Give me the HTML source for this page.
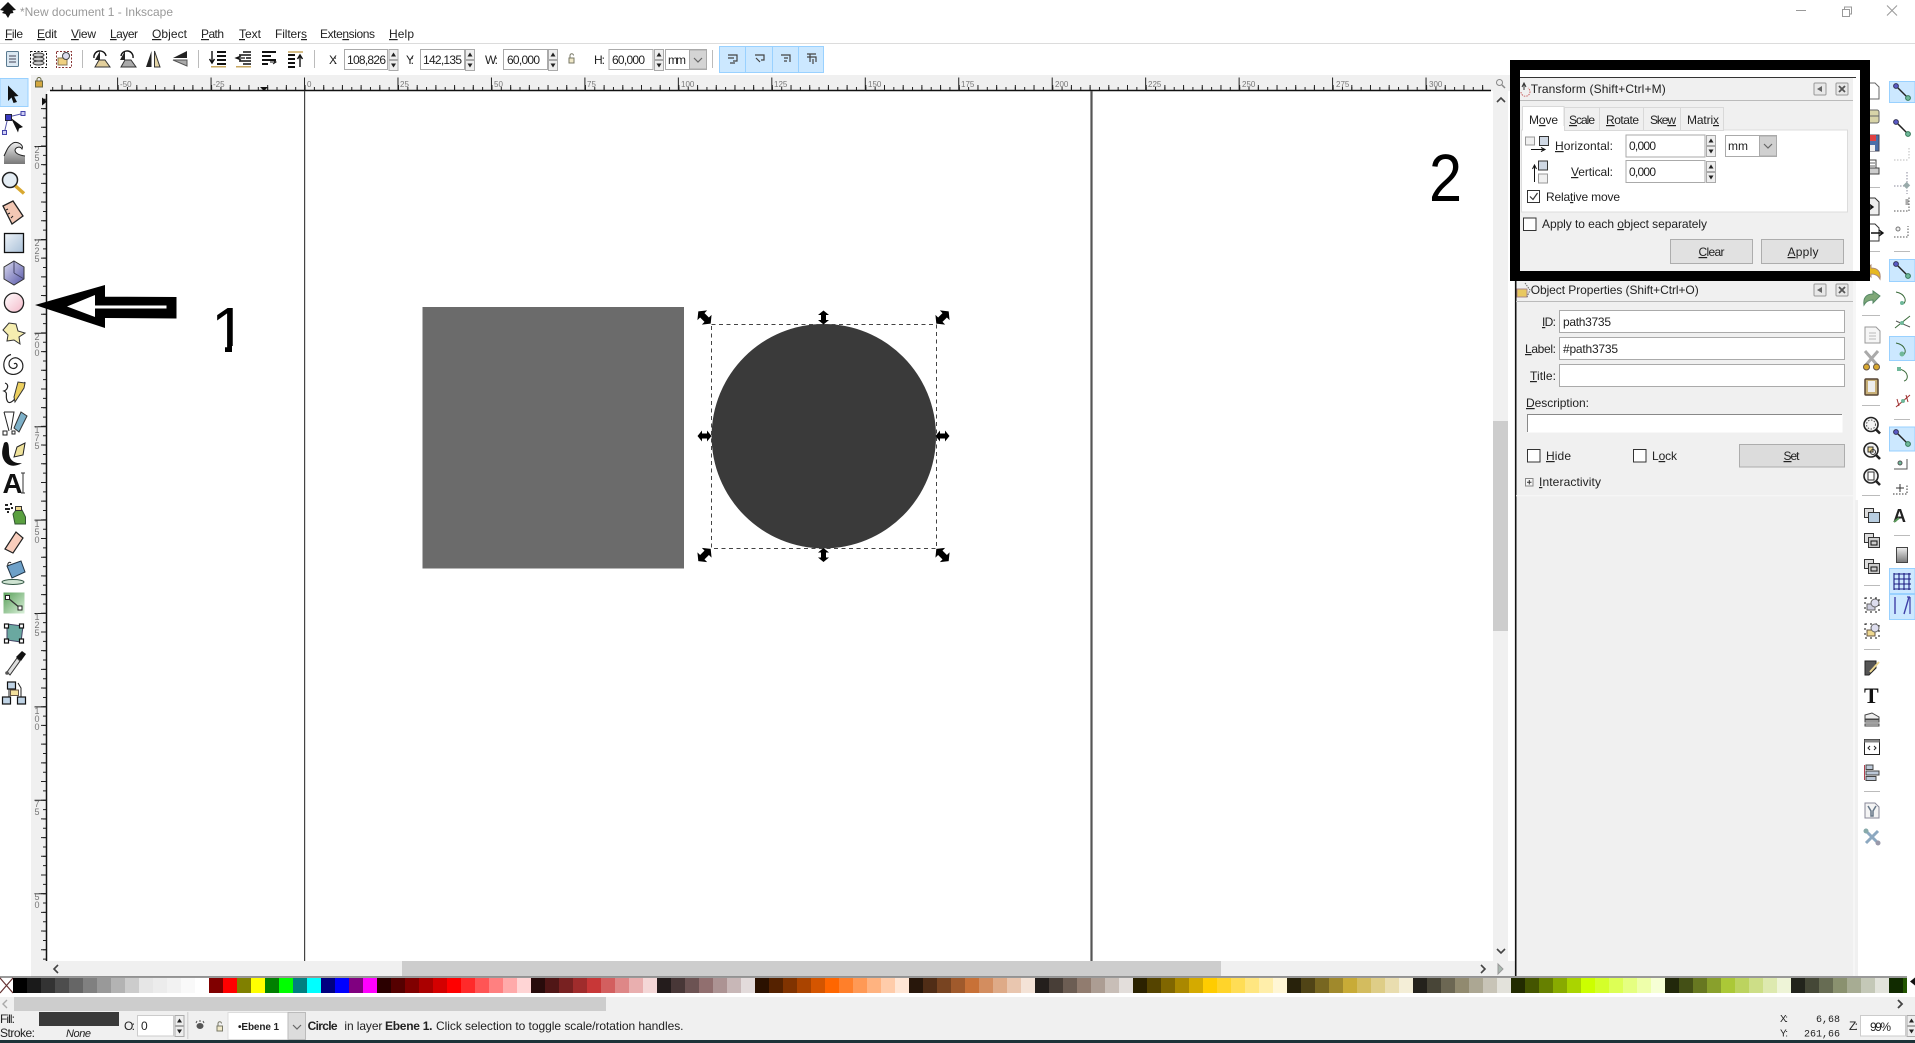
<!DOCTYPE html>
<html><head><meta charset="utf-8"><title>Inkscape</title>
<style>
html,body{margin:0;padding:0;background:#fff;width:1915px;height:1043px;overflow:hidden}
svg{position:absolute;left:0;top:0}
text{font-family:"Liberation Sans",sans-serif;font-size:12px;fill:#222}
.u{text-decoration:underline}
.r{font-size:8px;fill:#777}
.v{font-size:9px;fill:#777;text-anchor:middle}
.g{fill:#999}
#pal{position:absolute;left:13px;top:978px;height:15px;width:1894px;font-size:0;white-space:nowrap;overflow:hidden}
#pal i{display:inline-block;width:14px;height:15px}
</style></head><body>
<svg width="1915" height="1043" viewBox="0 0 1915 1043" xmlns="http://www.w3.org/2000/svg">
<defs>
<clipPath id="nofoot"><path d="M200 290H240V346H232V353H225V346H200Z"/></clipPath>
<linearGradient id="gb" x1="0" y1="0" x2="1" y2="1"><stop offset="0" stop-color="#eef3f8"/><stop offset="1" stop-color="#a9c0d8"/></linearGradient>
<linearGradient id="gp" x1="0" y1="0" x2="1" y2="1"><stop offset="0" stop-color="#fff"/><stop offset="1" stop-color="#f4b8c8"/></linearGradient>
<linearGradient id="gg" x1="0" y1="0" x2="0" y2="1"><stop offset="0" stop-color="#eee"/><stop offset="1" stop-color="#777"/></linearGradient>
<linearGradient id="gv" x1="0" y1="0" x2="1" y2="1"><stop offset="0" stop-color="#dcdcf0"/><stop offset="1" stop-color="#5656a8"/></linearGradient>
<linearGradient id="gn" x1="0" y1="0" x2="1" y2="1"><stop offset="0" stop-color="#5aa05a"/><stop offset="1" stop-color="#d9f0d9"/></linearGradient>
<g id="sp"><rect x=".5" y=".5" width="9" height="10" fill="#eee" stroke="#aaa"/><rect x=".5" y="11.5" width="9" height="10" fill="#eee" stroke="#aaa"/><path d="M2.5 7.5 L5 3.5 L7.5 7.5Z M2.5 14.5 L7.5 14.5 L5 18.5Z" fill="#222"/></g>
<g id="hd"><path d="M-7 0 L-2.5 -5.5 L-2.5 -2.5 L2.5 -2.5 L2.5 -5.5 L7 0 L2.5 5.5 L2.5 2.5 L-2.5 2.5 L-2.5 5.5Z" fill="#000"/></g>
<g id="sn"><line x1="-6" y1="-6" x2="5" y2="5" stroke="#222" stroke-width="1.5"/><circle cx="-6" cy="-6" r="2.4" fill="#5a5ac8" stroke="#335"/><circle cx="6" cy="6" r="2.4" fill="#6fb89a" stroke="#375"/></g>
<g id="zm"><circle cx="-1" cy="-1" r="7" fill="#f4f4f4" stroke="#222" stroke-width="1.6"/><line x1="4" y1="4" x2="8" y2="8" stroke="#222" stroke-width="2.6"/></g>
<g id="ch"><path d="M-4 -2 L0 2 L4 -2" fill="none" stroke="#666" stroke-width="1.2"/></g>
<g id="dkl"><rect x="-6" y="-6" width="12" height="12" rx="1" fill="#e8e8e8" stroke="#999"/><path d="M2 -3 L-3 0 L2 3Z" fill="#666"/></g>
<g id="dkx"><rect x="-6" y="-6" width="12" height="12" rx="1" fill="#e8e8e8" stroke="#999"/><path d="M-3 -3 L3 3 M3 -3 L-3 3" stroke="#555" stroke-width="1.8"/></g>
</defs>

<!-- backgrounds -->
<rect width="1915" height="1043" fill="#fff"/>
<rect x="31" y="75" width="1479" height="16" fill="#f0f0f0"/>
<rect x="31" y="75" width="16" height="886" fill="#f0f0f0"/>
<rect x="1493" y="91" width="15" height="870" fill="#f0f0f0"/>
<rect x="1516" y="280" width="337" height="696" fill="#f0f0f0"/>
<rect x="1853" y="280" width="3" height="696" fill="#f6f6f6"/>
<rect x="1855" y="500" width="3" height="476" fill="#f0f0f0"/>

<!-- title bar -->
<path d="M8 2 L16 10 L12.5 10.5 L13.5 13 L10.5 13.5 L8 18 L5.5 14 L2 13 L4 11 L0 10Z" fill="#111"/>
<text x="20" y="16" class="g" textLength="153" lengthAdjust="spacingAndGlyphs">*New document 1 - Inkscape</text>
<path d="M1796 10.5H1806" stroke="#999"/>
<path d="M1842.5 9.5h7v7h-7zM1844.5 9.5v-2.5h7v7h-2" fill="none" stroke="#999"/>
<path d="M1887 5.5L1897 15.5M1897 5.5L1887 15.5" stroke="#999"/>

<!-- menu -->
<text x="5" y="38" textLength="18"><tspan class="u">F</tspan>ile</text>
<text x="37" y="38" textLength="20"><tspan class="u">E</tspan>dit</text>
<text x="71" y="38" textLength="25"><tspan class="u">V</tspan>iew</text>
<text x="110" y="38" textLength="28"><tspan class="u">L</tspan>ayer</text>
<text x="152" y="38" textLength="35"><tspan class="u">O</tspan>bject</text>
<text x="201" y="38" textLength="23"><tspan class="u">P</tspan>ath</text>
<text x="239" y="38" textLength="22"><tspan class="u">T</tspan>ext</text>
<text x="275" y="38" textLength="32">Filter<tspan class="u">s</tspan></text>
<text x="320" y="38" textLength="55">Exte<tspan class="u">n</tspan>sions</text>
<text x="389" y="38" textLength="25"><tspan class="u">H</tspan>elp</text>
<line x1="0" y1="43.5" x2="1915" y2="43.5" stroke="#dcdcdc"/>

<!-- top toolbar icons -->
<g>
<rect x="6.5" y="51.5" width="12" height="15" rx="1" fill="#dbe8f2" stroke="#5a7a90"/><path d="M9 56H16M9 59H16M9 62H16" stroke="#445"/>
<rect x="30.5" y="51.5" width="16" height="16" fill="#fff" stroke="#111" stroke-dasharray="2 1.5"/><ellipse cx="38.5" cy="55" rx="5.5" ry="2" fill="#ccc" stroke="#333"/><ellipse cx="38.5" cy="59" rx="5.5" ry="2" fill="#ccc" stroke="#333"/><ellipse cx="38.5" cy="63" rx="5.5" ry="2" fill="#ccc" stroke="#333"/>
<rect x="56.5" y="51.5" width="15" height="16" fill="#fff" stroke="#833" stroke-dasharray="2 1.5"/><rect x="58" y="58" width="9" height="7" fill="#f0d080" stroke="#875"/><circle cx="66" cy="56" r="3.5" fill="#dde" stroke="#444"/>
<line x1="82.5" y1="50" x2="82.5" y2="68" stroke="#bbb"/>
<path d="M95 67L110 67L105 60L99 60Z" fill="#e2cf9c" stroke="#333"/><path d="M100 60L100 51L95 60Z" fill="#222"/><path d="M94 58A6 6 0 0 1 106 56" fill="none" stroke="#111" stroke-width="1.4"/>
<path d="M121 67L136 67L131 60L125 60Z" fill="#aaa" stroke="#333"/><path d="M125 60L125 51L120 60Z" fill="#222"/><path d="M133 58A6 6 0 0 0 121 56" fill="none" stroke="#111" stroke-width="1.4"/>
<path d="M151.5 51L146 67H151.5Z" fill="#222"/><path d="M154.5 51L160 67H154.5Z" fill="#e4d5a6" stroke="#333"/>
<path d="M187 51L173 58H187Z" fill="#222"/><path d="M187 60L173 60L187 66Z" fill="#aaa" stroke="#555"/>
<line x1="198.5" y1="50" x2="198.5" y2="68" stroke="#bbb"/>
<path d="M212 51V62M209.5 59L212 63L214.5 59" fill="none" stroke="#111" stroke-width="1.4"/><path d="M217 52H226M217 56H226M217 60H226M217 64H226" stroke="#111" stroke-width="2"/><rect x="211" y="66" width="15" height="1.5" fill="#c9a860"/>
<path d="M236 58H245M241 56L236 58L241 60" fill="none" stroke="#111" stroke-width="1.2"/><path d="M243 52H251M239 55H251M246 58H251M239 61H251M243 64H251" stroke="#111" stroke-width="1.6"/><rect x="236" y="66" width="15" height="1.5" fill="#c9a860"/>
<path d="M262 52H276M262 56H271M262 60H276M262 64H268" stroke="#111" stroke-width="2"/><path d="M270 62H276M273 60L276 62L273 64" fill="none" stroke="#111"/>
<path d="M288 52H303" stroke="#c9a860" stroke-width="1.5"/><path d="M288 55H295M288 59H295M288 63H295M288 67H295" stroke="#111" stroke-width="2"/><path d="M300 67V56M297.5 59L300 55L302.5 59" fill="none" stroke="#111" stroke-width="1.4"/>
<line x1="314.5" y1="50" x2="314.5" y2="68" stroke="#bbb"/>
</g>
<text x="329" y="64" textLength="8">X:</text>
<rect x="344.5" y="49.5" width="43" height="20" fill="#fff" stroke="#aaa"/><text x="347" y="64" textLength="39">108,826</text>
<use href="#sp" transform="translate(388.5,49)"/>
<text x="406" y="64" textLength="8">Y:</text>
<rect x="420.5" y="49.5" width="44" height="20" fill="#fff" stroke="#aaa"/><text x="423" y="64" textLength="39">142,135</text>
<use href="#sp" transform="translate(465,49)"/>
<text x="485" y="64" textLength="13">W:</text>
<rect x="503.5" y="49.5" width="44" height="20" fill="#fff" stroke="#aaa"/><text x="507" y="64" textLength="33">60,000</text>
<use href="#sp" transform="translate(548,49)"/>
<rect x="569" y="58" width="5" height="5" fill="#f0e8c8" stroke="#776"/><path d="M570 58V55.5A1.7 1.7 0 0 1 573.5 55.5" fill="none" stroke="#776"/>
<text x="594" y="64" textLength="11">H:</text>
<rect x="609" y="49.5" width="44" height="20" fill="#fff" stroke="#aaa"/><text x="612" y="64" textLength="33">60,000</text>
<use href="#sp" transform="translate(654,49)"/>
<rect x="665.5" y="49.5" width="41" height="20" fill="#fff" stroke="#aaa"/><rect x="689.5" y="50" width="17" height="19" fill="#d4d4d4" stroke="#aaa"/><use href="#ch" transform="translate(698,60)"/>
<text x="668" y="64" textLength="18">mm</text>
<line x1="712.5" y1="50" x2="712.5" y2="68" stroke="#bbb"/>
<rect x="719.5" y="46.5" width="104" height="26" fill="#cce8ff" stroke="#99d1ff"/>
<path d="M745.5 46V72M772.5 46V72M798.5 46V72" stroke="#99d1ff"/>
<g fill="none" stroke="#444" stroke-width="1.2">
<path d="M728 55H737V61H733M728 58H734M730 63H735"/>
<path d="M755 55H764V60H761M756 58L760 62"/>
<path d="M781 55H790V62M784 58H788M784 61H787"/>
<path d="M807 54H816M807 57H816V62M810 54V62M813 59V64"/>
</g>

<!-- horizontal ruler -->
<rect x="35.5" y="81" width="7" height="6" fill="#d4a840" stroke="#664"/><path d="M37 81V79.5A2 2 0 0 1 41 79.5V81" fill="none" stroke="#664"/>
<line x1="50" y1="90.5" x2="1491" y2="90.5" stroke="#111" stroke-width="1.5"/>
<line x1="52.2" y1="88.5" x2="1491" y2="88.5" stroke="#222" stroke-width="3" stroke-dasharray="1 8.346"/>
<line x1="61.55" y1="87.5" x2="1491" y2="87.5" stroke="#222" stroke-width="5" stroke-dasharray="1 17.692"/>
<line x1="117.1" y1="84" x2="1491" y2="84" stroke="#222" stroke-width="13" stroke-dasharray="1 92.46"/>
<g class="r">
<text class="r" x="120" y="87">-50</text><text class="r" x="213" y="87">-25</text><text class="r" x="307" y="87">0</text><text class="r" x="400" y="87">25</text><text class="r" x="494" y="87">50</text><text class="r" x="587" y="87">75</text><text class="r" x="681" y="87">100</text><text class="r" x="774" y="87">125</text><text class="r" x="868" y="87">150</text><text class="r" x="961" y="87">175</text><text class="r" x="1055" y="87">200</text><text class="r" x="1148" y="87">225</text><text class="r" x="1242" y="87">250</text><text class="r" x="1336" y="87">275</text><text class="r" x="1429" y="87">300</text>
</g>
<path d="M260 87H268L264 91Z" fill="#111"/>

<!-- vertical ruler -->
<line x1="46.5" y1="94" x2="46.5" y2="961" stroke="#111" stroke-width="1.5"/>
<line x1="44.5" y1="98.8" x2="44.5" y2="961" stroke="#222" stroke-width="3" stroke-dasharray="1 8.346"/>
<line x1="43.5" y1="108.1" x2="43.5" y2="961" stroke="#222" stroke-width="5" stroke-dasharray="1 17.692"/>
<line x1="40.5" y1="146" x2="40.5" y2="961" stroke="#222" stroke-width="12" stroke-dasharray="1 92.4"/>
<path d="M42 97.5V105.5L47 101.5Z" fill="#111"/>
<text class="v" x="37" y="153">2</text><text class="v" x="37" y="161">5</text><text class="v" x="37" y="169">0</text>
<text class="v" x="37" y="246">2</text><text class="v" x="37" y="254">2</text><text class="v" x="37" y="262">5</text>
<text class="v" x="37" y="340">2</text><text class="v" x="37" y="348">0</text><text class="v" x="37" y="356">0</text>
<text class="v" x="37" y="433">1</text><text class="v" x="37" y="441">7</text><text class="v" x="37" y="449">5</text>
<text class="v" x="37" y="527">1</text><text class="v" x="37" y="535">5</text><text class="v" x="37" y="543">0</text>
<text class="v" x="37" y="620">1</text><text class="v" x="37" y="628">2</text><text class="v" x="37" y="636">5</text>
<text class="v" x="37" y="714">1</text><text class="v" x="37" y="722">0</text><text class="v" x="37" y="730">0</text>
<text class="v" x="37" y="807">7</text><text class="v" x="37" y="815">5</text>
<text class="v" x="37" y="900">5</text><text class="v" x="37" y="908">0</text>

<!-- left toolbox -->
<rect x="0" y="78.5" width="28" height="28" fill="#cce8ff" stroke="#99d1ff"/>
<path d="M8 85.5L18.5 96L14.2 96.5L17 102L13.5 103L11.5 97.5L8 101Z" fill="#111"/>
<path d="M8 117L23 113.5M8 117L4.5 132" stroke="#5555aa" fill="none"/><rect x="5.5" y="114.5" width="6" height="6" fill="#3a3ac0" stroke="#223"/><rect x="21" y="111.5" width="4" height="4" fill="#cfcff5" stroke="#44a"/><rect x="2.5" y="130.5" width="4" height="4" fill="#cfcff5" stroke="#44a"/><path d="M11 118L23 127L19 128.5L18 132.5Z" fill="#111"/>
<path d="M4 164V156C7 150 8 146 13 143C18 141 24 145 22 149C20 146 16 147 15 150C15 153 18 155 25 156V164Z" fill="url(#gg)"/><path d="M4 156C7 150 8 146 13 143C18 141 24 145 22 149C20 146 16 147 15 150C15 153 18 155 25 156" fill="none" stroke="#222"/>
<circle cx="10" cy="180" r="7.5" fill="#e4edf4" stroke="#222" stroke-width="1.5"/><line x1="15.5" y1="186" x2="24" y2="193.5" stroke="#d8a830" stroke-width="3.5"/>
<path d="M3 206L13 201L23 216L12 224Z" fill="#f3c8b4" stroke="#222" stroke-width="1.3"/><path d="M6 210L8 209M8 214L10 213M11 218L13 216" stroke="#222"/>
<rect x="4.5" y="233.5" width="19" height="19" fill="url(#gb)" stroke="#111" stroke-width="1.3"/>
<path d="M14 261L24 267V279L14 285L4 279V267Z" fill="url(#gv)" stroke="#333"/><path d="M14 273V261M14 273L24 279" stroke="#446" fill="none"/>
<circle cx="14" cy="302.7" r="9.6" fill="url(#gp)" stroke="#222" stroke-width="1.3"/>
<path d="M3 330L9 323L16 324L18 331L25 333L19 337L20 344L14 340L7 341L8 335Z" fill="#f6eeb0" stroke="#333"/>
<path d="M14 364C16 362 18 365 16.5 367C14 370 9 368 9 364C9 359 15 356 19 359C24 362 24 369 20 372C15 376 7 375 4.5 369C2.5 363 5 356 11 354.5" fill="none" stroke="#222" stroke-width="1.2"/>
<path d="M5 383C10 385 7 390 4 391C9 393 4 397 8 402C11 405 20 395 25 382" fill="none" stroke="#222" stroke-width="1.2"/><path d="M14 397L18 382L25 383L24 388L15 402Z" fill="#edd060" stroke="#333"/>
<path d="M4 412H14L11 430M4 412L9 431" fill="none" stroke="#222"/><rect x="3" y="431" width="4" height="4" fill="#fff" stroke="#222"/><rect x="12" y="431" width="3" height="3" fill="#fff" stroke="#222"/><path d="M14 428L21 412L27 416L19 432Z" fill="#7db0c8" stroke="#333"/>
<path d="M4 443C8 440 9 444 9 452C9 460 14 464 22 463C14 468 6 466 3 458C1 452 3 447 4 443Z" fill="#111"/><path d="M14 457L17 447L25 443L23 455Z" fill="#efe29a" stroke="#222"/>
<text x="2.5" y="493" style="font-size:28px;font-weight:bold;fill:#111" textLength="20" lengthAdjust="spacingAndGlyphs">A</text><path d="M23 473V493M21 473H25M21 493H25" stroke="#333"/>
<path d="M5 505H8M5 509H10M7 512H9M10 504H12M11 508H13" stroke="#222" stroke-width="2"/><path d="M13 514L16 510H22L25.5 517V524L15 524Z" fill="#5aa040" stroke="#353"/><rect x="15.5" y="506.5" width="6" height="4" fill="#eed890" stroke="#333"/>
<path d="M5 549L16 532L23 538L13 553Z" fill="#f8cdbc" stroke="#222" stroke-width="1.2"/>
<path d="M7 566L21 561L25 572L12 578Z" fill="#6da0c8" stroke="#234"/><path d="M8 566C7 563 10 561 11 563" fill="none" stroke="#222"/><ellipse cx="13" cy="582" rx="11" ry="2.5" fill="#cfe4d2" stroke="#354"/>
<rect x="3.5" y="592.5" width="21" height="21" fill="url(#gn)"/><line x1="8" y1="598" x2="20" y2="608" stroke="#333" stroke-width="1.3"/><rect x="5.5" y="595.5" width="4" height="4" fill="#fff" stroke="#222"/><rect x="18" y="606" width="4" height="4" fill="#fff" stroke="#222"/>
<path d="M7 624L23 626L21 642L7 640Z" fill="#6aa8a0" stroke="#446"/><g fill="#fff" stroke="#111" stroke-width="1.2"><rect x="4.5" y="624" width="4" height="4"/><rect x="19.5" y="624" width="4" height="4"/><rect x="4.5" y="639" width="4" height="4"/><rect x="19.5" y="639" width="4" height="4"/></g>
<path d="M7 672L17 658L20 661L10 675Z" fill="#ddd" stroke="#333"/><path d="M16 657L22 651L26 654L21 661Z" fill="#111"/><circle cx="7" cy="673" r="1.8" fill="#555"/>
<path d="M15 695V682M9 704V688L12 683M21 704V688L18 683" fill="none" stroke="#222"/><rect x="7.5" y="682" width="8" height="7" fill="#c0d4e6" stroke="#111" stroke-width="1.2"/><rect x="10.5" y="690" width="8" height="5.5" fill="#f4e09c" stroke="#654"/><rect x="2.5" y="697" width="8" height="7" fill="#c0d4e6" stroke="#111" stroke-width="1.2"/><rect x="17.5" y="697" width="8" height="7" fill="#c0d4e6" stroke="#111" stroke-width="1.2"/>

<!-- canvas objects -->
<rect x="422.5" y="307" width="261.5" height="261.5" fill="#6b6b6b"/>
<line x1="304.6" y1="91" x2="304.6" y2="961" stroke="#444" stroke-width="1.2"/>
<line x1="1091.5" y1="91" x2="1091.5" y2="961" stroke="#555" stroke-width="2.2"/>
<circle cx="823.8" cy="436.2" r="112.2" fill="#3a3a3a"/>
<rect x="711.5" y="324.5" width="225" height="224" fill="none" stroke="#444" stroke-dasharray="4 3.5"/>
<use href="#hd" transform="translate(704.5,317.5) rotate(45) scale(1.25)"/>
<use href="#hd" transform="translate(942.5,317.5) rotate(-45) scale(1.25)"/>
<use href="#hd" transform="translate(704.5,555) rotate(-45) scale(1.25)"/>
<use href="#hd" transform="translate(942.5,555) rotate(45) scale(1.25)"/>
<use href="#hd" transform="translate(823.5,317.5) rotate(90)"/>
<use href="#hd" transform="translate(823.5,555) rotate(90)"/>
<use href="#hd" transform="translate(704.5,436)"/>
<use href="#hd" transform="translate(942.5,436)"/>

<!-- annotation 1 -->
<path d="M35 305L105 285V296.7L176.5 297V318.5L105 318V328Z" fill="#000"/>
<path d="M67 306.5L95 295V305.5H166.5V308.5H95V317Z" fill="#fff"/>
<text x="211" y="352" clip-path="url(#nofoot)" style="font-size:64px;fill:#000">1</text>

<!-- v scrollbar -->
<rect x="1493" y="421" width="15" height="210" fill="#cdcdcd"/>
<path d="M1497 102L1501 98L1505 102" fill="none" stroke="#444" stroke-width="1.6"/>
<path d="M1497 949L1501 953L1505 949" fill="none" stroke="#444" stroke-width="1.6"/>
<circle cx="1499.5" cy="82.5" r="3" fill="#eee" stroke="#888"/><line x1="1502" y1="85" x2="1505" y2="88" stroke="#888" stroke-width="1.5"/>

<!-- h scrollbar -->
<rect x="31" y="961" width="1484" height="16" fill="#f0f0f0"/>
<rect x="402" y="961" width="819" height="15" fill="#cdcdcd"/>
<path d="M58 965L54 969L58 973" fill="none" stroke="#444" stroke-width="1.6"/>
<path d="M1481 965L1485 969L1481 973" fill="none" stroke="#444" stroke-width="1.6"/>
<path d="M1498 964L1503 969L1498 974Z" fill="#aab8b0" stroke="#999"/>
<line x1="0" y1="977" x2="1907" y2="977" stroke="#333"/>

<!-- command bar -->
<g stroke="#bbb"><path d="M1862 187.5H1880M1862 251.5H1880M1862 315.5H1880M1862 405.5H1880M1862 495.5H1880M1864 585.5H1880M1864 649.5H1880M1864 791.5H1880"/></g>
<path d="M1864 83H1875L1879 87V99H1864Z" fill="#fff" stroke="#666"/>
<rect x="1863" y="110" width="16" height="13" rx="2" fill="#d8d4a8" stroke="#666"/><path d="M1863 116H1879" stroke="#666"/>
<rect x="1863" y="135" width="16" height="16" fill="#4a6ea8" stroke="#445"/><rect x="1866" y="135" width="10" height="6" fill="#e04040"/><rect x="1867" y="145" width="8" height="6" fill="#eee"/>
<path d="M1865 160H1876V168H1865Z" fill="#fff" stroke="#444"/><rect x="1863" y="168" width="16" height="6" fill="#ccc" stroke="#444"/><path d="M1867 163H1875M1867 166H1875" stroke="#666"/>
<path d="M1865 198H1875L1879 202V215H1865Z" fill="#eee" stroke="#333"/><path d="M1862 207H1872M1869 204L1873 207L1869 210" fill="none" stroke="#111" stroke-width="1.4"/>
<path d="M1865 224H1875L1879 228V241H1865Z" fill="#fff" stroke="#333"/><path d="M1871 233H1882M1879 230L1883 233L1879 236" fill="none" stroke="#111" stroke-width="1.4"/>
<path d="M1864 270L1871 265V268C1878 268 1881 272 1880 279C1878 275 1875 274 1871 274V277Z" fill="#e6b820" stroke="#a87"/>
<path d="M1880 296L1873 291V294C1866 294 1863 298 1864 305C1866 301 1869 300 1873 300V303Z" fill="#7fa878" stroke="#586"/>
<path d="M1865 327H1876L1880 331V343H1865Z" fill="#f6f6f6" stroke="#999"/><path d="M1869 333H1876M1869 336H1876M1869 339H1876" stroke="#bbb"/>
<path d="M1865 351L1878 366M1878 351L1865 366" stroke="#aaa" stroke-width="3"/><circle cx="1866.5" cy="367" r="3" fill="#d8a830" stroke="#654"/><circle cx="1876.5" cy="367" r="3" fill="#d8a830" stroke="#654"/>
<rect x="1865" y="379" width="13" height="16" rx="1" fill="#c8b078" stroke="#543" stroke-width="1.5"/><rect x="1868" y="381" width="7" height="11" fill="#eee"/>
<use href="#zm" transform="translate(1872,425.5)"/><circle cx="1871" cy="424.5" r="4.5" fill="none" stroke="#555" stroke-dasharray="1.5 1.5"/>
<use href="#zm" transform="translate(1872,451)"/><rect x="1868" y="447" width="5" height="5" fill="#eed890" stroke="#333"/><circle cx="1873" cy="452" r="2.5" fill="none" stroke="#333"/>
<use href="#zm" transform="translate(1872,477)"/><rect x="1868" y="472" width="6" height="8" fill="#fff" stroke="#333"/>
<rect x="1864.5" y="508.5" width="9" height="9" fill="#ddd" stroke="#333"/><rect x="1868.5" y="512.5" width="11" height="10" fill="#b8cde0" stroke="#333"/>
<rect x="1864.5" y="533.5" width="9" height="9" fill="#ddd" stroke="#333"/><rect x="1868.5" y="537.5" width="11" height="10" fill="#ccc" stroke="#333"/><rect x="1871" y="541" width="6" height="4" fill="none" stroke="#111"/>
<rect x="1864.5" y="559.5" width="9" height="9" fill="#ddd" stroke="#333"/><rect x="1868.5" y="563.5" width="11" height="10" fill="#ccc" stroke="#333"/><rect x="1871" y="567" width="6" height="4" fill="none" stroke="#111"/>
<rect x="1865" y="598" width="14" height="14" fill="none" stroke="#111" stroke-dasharray="2 3"/><rect x="1867" y="604" width="8" height="6" fill="#ccd" stroke="#666"/><circle cx="1875" cy="603" r="4" fill="#dde" stroke="#666"/>
<rect x="1865" y="624" width="14" height="14" fill="none" stroke="#111" stroke-dasharray="2 3"/><rect x="1867" y="630" width="8" height="6" fill="#eed890" stroke="#654"/><circle cx="1875" cy="628" r="4" fill="#dde" stroke="#666"/>
<path d="M1865 661H1876V668L1869 675H1865Z" fill="#555" stroke="#222"/><path d="M1870 672L1879 662" stroke="#eed890" stroke-width="2"/>
<text x="1864" y="703" style="font-family:'Liberation Serif',serif;font-weight:bold;font-size:22px;fill:#111">T</text>
<g fill="#eee" stroke="#444"><path d="M1865 715L1872 713L1879 717V719L1865 719Z"/><path d="M1865 720H1879V722H1865Z"/><path d="M1865 724H1879V726H1865Z"/></g>
<rect x="1864.5" y="739.5" width="15" height="15" fill="#fff" stroke="#222"/><rect x="1864.5" y="739.5" width="15" height="3" fill="#888"/><path d="M1870 746L1868 748L1870 750M1874 746L1876 748L1874 750" fill="none" stroke="#222"/>
<line x1="1864.5" y1="765" x2="1864.5" y2="780" stroke="#b04050"/><rect x="1866" y="765" width="7" height="4.5" fill="#bcc8d8" stroke="#444"/><rect x="1866" y="771" width="13" height="4" fill="#bcc8d8" stroke="#444"/><rect x="1866" y="776.5" width="10" height="4" fill="#bcc8d8" stroke="#444"/>
<path d="M1865 803H1875L1879 807V818H1865Z" fill="#f4f4f4" stroke="#889"/><path d="M1868 806L1871 811V816H1873V811L1876 806" fill="none" stroke="#678" stroke-width="1.5"/>
<path d="M1866 831L1878 843M1878 831L1866 843" stroke="#8ca8c0" stroke-width="3"/><circle cx="1866" cy="831" r="2.5" fill="#8aa"/><circle cx="1878" cy="843" r="2.5" fill="#99a"/>

<!-- snap bar -->
<g fill="#cce8ff" stroke="#99d1ff"><rect x="1889.5" y="81.5" width="25.5" height="21"/><rect x="1889.5" y="259.5" width="25.5" height="22"/><rect x="1889.5" y="336.5" width="25.5" height="24"/><rect x="1889.5" y="427" width="25.5" height="24"/><rect x="1889.5" y="568.5" width="25.5" height="25"/><rect x="1889.5" y="594.5" width="25.5" height="25"/></g>
<use href="#sn" transform="translate(1902,92)"/>
<use href="#sn" transform="translate(1902,128)"/>
<path d="M1894 160H1909M1909 148V160" stroke="#bbb" stroke-dasharray="1.5 1.5" fill="none"/>
<path d="M1894 186H1908M1907 172V194" stroke="#889" stroke-dasharray="1.5 1.5" fill="none"/><rect x="1904.5" y="183" width="5" height="5" fill="#9aa" transform="rotate(45 1907 185)"/>
<path d="M1894 211H1909V196" stroke="#555" stroke-dasharray="1.5 1.5" fill="none"/><rect x="1905.5" y="199" width="3" height="6" fill="#aaa"/>
<path d="M1894 237H1908V226" stroke="#555" stroke-dasharray="1.5 1.5" fill="none"/><circle cx="1898" cy="229" r="2" fill="#eee" stroke="#777"/>
<line x1="1894" y1="251.5" x2="1910" y2="251.5" stroke="#bbb"/>
<use href="#sn" transform="translate(1902,270)"/>
<path d="M1896 292C1906 294 1907 302 1903 304" fill="none" stroke="#3a6a3a"/><circle cx="1902" cy="303" r="2" fill="#6fb89a"/>
<path d="M1895 328L1910 316" stroke="#3a6a3a"/><path d="M1896 321L1910 327" stroke="#555"/><circle cx="1902" cy="323" r="2" fill="#6fb89a"/>
<path d="M1896 343C1906 345 1907 353 1903 355" fill="none" stroke="#3a6a3a"/><circle cx="1902" cy="354" r="2.5" fill="#6fb89a"/>
<path d="M1899 369C1909 371 1909 380 1904 381" fill="none" stroke="#3a6a3a"/><rect x="1897" y="367" width="4" height="4" fill="#6fb89a"/>
<path d="M1896 407L1910 395" stroke="#a03030"/><path d="M1897 399L1899 406M1906 395L1908 402" stroke="#a03030"/><circle cx="1903" cy="401" r="2" fill="#6fb89a"/>
<line x1="1894" y1="419.5" x2="1910" y2="419.5" stroke="#bbb"/>
<use href="#sn" transform="translate(1902,438)"/>
<path d="M1894 469H1907V459" stroke="#555" fill="none"/><circle cx="1900" cy="463" r="2" fill="#6fb89a" stroke="#555"/>
<path d="M1893 494H1907V485" stroke="#333" stroke-dasharray="1.5 1.5" fill="none"/><path d="M1896 488H1904M1900 484V492" stroke="#333"/>
<text x="1893" y="522" style="font-weight:bold;font-size:18px;fill:#222">A</text><line x1="1894" y1="522" x2="1899" y2="518" stroke="#5a9a5a" stroke-width="2"/>
<line x1="1894" y1="535.5" x2="1910" y2="535.5" stroke="#bbb"/>
<rect x="1896.5" y="547.5" width="11" height="15" fill="url(#gg)" stroke="#444"/>
<path d="M1894 573V590M1899 573V590M1904 573V590M1909 573V590M1894 574H1911M1894 579H1911M1894 584H1911M1894 589H1911" stroke="#1a1a80" stroke-width="1.1"/>
<path d="M1895 597V614M1904 614L1909 597" stroke="#4040a8" stroke-width="1.4"/><path d="M1907 597H1910M1910 597V614" stroke="#4040a8" stroke-width="1.2"/>

<!-- transform panel box -->
<rect x="1510" y="60" width="360" height="221" fill="#000"/>
<rect x="1520" y="70" width="340" height="201" fill="#fff"/>
<line x1="1520" y1="77.5" x2="1856" y2="77.5" stroke="#333"/>
<rect x="1520" y="78" width="333" height="193" fill="#f0f0f0"/>
<path d="M1521 92A4.5 4.5 0 1 0 1528 88" fill="none" stroke="#c66" stroke-dasharray="1.5 1"/><path d="M1524 84V90M1522 87L1524 83L1526 87" fill="none" stroke="#333"/>
<text x="1530.7" y="93" textLength="135">Transform (Shift+Ctrl+M)</text>
<use href="#dkl" transform="translate(1820,89)"/><use href="#dkx" transform="translate(1842,89)"/>
<line x1="1520" y1="100.5" x2="1853" y2="100.5" stroke="#bbb"/>
<rect x="1521.5" y="130" width="326" height="82" fill="#fff" stroke="#dcdcdc"/>
<g fill="#f0f0f0" stroke="#d9d9d9"><rect x="1564.5" y="107.5" width="35" height="23"/><rect x="1599.5" y="107.5" width="44" height="23"/><rect x="1643.5" y="107.5" width="37" height="23"/><rect x="1680.5" y="107.5" width="43" height="23"/></g>
<path d="M1522.5 130.5V106.5H1564V130.5" fill="#fff" stroke="#d9d9d9"/><rect x="1523" y="126" width="41" height="6" fill="#fff"/>
<text x="1529" y="124" textLength="29">M<tspan class="u">o</tspan>ve</text>
<text x="1569" y="124" textLength="26"><tspan class="u">S</tspan>cale</text>
<text x="1606" y="124" textLength="33"><tspan class="u">R</tspan>otate</text>
<text x="1650" y="124" textLength="26">Ske<tspan class="u">w</tspan></text>
<text x="1687" y="124" textLength="32">Matri<tspan class="u">x</tspan></text>
<rect x="1525.5" y="137" width="9" height="8" fill="#f0f0f0" stroke="#999"/><rect x="1539.5" y="136.5" width="9" height="9" fill="#cfd8e4" stroke="#333"/><path d="M1531 149.5H1544M1541 147.5L1545 149.5L1541 151.5" fill="none" stroke="#111"/>
<text x="1555" y="150" textLength="58"><tspan class="u">H</tspan>orizontal:</text>
<rect x="1626" y="135" width="79" height="22" fill="#fff" stroke="#aaa"/><text x="1629" y="150" textLength="27">0,000</text>
<use href="#sp" transform="translate(1706,135)"/>
<rect x="1725.5" y="135.5" width="51" height="21" fill="#fff" stroke="#aaa"/><rect x="1759.5" y="136" width="17" height="20" fill="#d0d0d0" stroke="#aaa"/><use href="#ch" transform="translate(1768,146)"/>
<text x="1728" y="150" textLength="20">mm</text>
<rect x="1538.5" y="161" width="9" height="9" fill="#cfd8e4" stroke="#333"/><rect x="1538.5" y="174" width="9" height="9" fill="#f0f0f0" stroke="#999"/><path d="M1534.5 182V166M1532.5 169L1534.5 165L1536.5 169" fill="none" stroke="#111"/>
<text x="1571" y="176" textLength="42"><tspan class="u">V</tspan>ertical:</text>
<rect x="1626" y="160.5" width="79" height="22" fill="#fff" stroke="#aaa"/><text x="1629" y="176" textLength="27">0,000</text>
<use href="#sp" transform="translate(1706,161)"/>
<rect x="1527.5" y="190.5" width="12" height="12" fill="#fff" stroke="#333"/><path d="M1530 196.5L1533 199.5L1537.5 193" fill="none" stroke="#333" stroke-width="1.2"/>
<text x="1546" y="201" textLength="74">Rela<tspan class="u">t</tspan>ive move</text>
<rect x="1523.5" y="218" width="12.5" height="12.5" fill="#fff" stroke="#333"/>
<text x="1542" y="228" textLength="165">Apply to each <tspan class="u">o</tspan>bject separately</text>
<rect x="1670.5" y="239.5" width="82" height="24" fill="#e1e1e1" stroke="#adadad"/><rect x="1761.5" y="239.5" width="82" height="24" fill="#e1e1e1" stroke="#adadad"/>
<text x="1698.5" y="256" textLength="26"><tspan class="u">C</tspan>lear</text>
<text x="1787.5" y="256" textLength="31"><tspan class="u">A</tspan>pply</text>
<text x="1429" y="201" style="font-size:67px;fill:#000" textLength="33" lengthAdjust="spacingAndGlyphs">2</text>

<!-- Object properties -->
<line x1="1515.7" y1="281" x2="1515.7" y2="976" stroke="#111" stroke-width="1.6"/>
<rect x="1517" y="289" width="10" height="8" fill="#e8c860" stroke="#a88"/><path d="M1525 283L1530 290L1527 297" fill="none" stroke="#666" stroke-dasharray="1.5 1"/>
<text x="1530.7" y="294" textLength="168">Object Properties (Shift+Ctrl+O)</text>
<use href="#dkl" transform="translate(1820,290)"/><use href="#dkx" transform="translate(1842,290)"/>
<line x1="1516" y1="301.5" x2="1853" y2="301.5" stroke="#bbb"/>
<text x="1542" y="326" textLength="14"><tspan class="u">I</tspan>D:</text>
<rect x="1559.5" y="310.5" width="285" height="22" fill="#fff" stroke="#aaa"/><text x="1563" y="326" textLength="48">path3735</text>
<text x="1525" y="353" textLength="31"><tspan class="u">L</tspan>abel:</text>
<rect x="1559.5" y="337.5" width="285" height="22" fill="#fff" stroke="#aaa"/><text x="1563" y="353" textLength="55">#path3735</text>
<text x="1530" y="380" textLength="26"><tspan class="u">T</tspan>itle:</text>
<rect x="1559.5" y="364.5" width="285" height="22" fill="#fff" stroke="#aaa"/>
<text x="1526" y="407" textLength="63"><tspan class="u">D</tspan>escription:</text>
<rect x="1527.5" y="414.5" width="315" height="18" fill="#fff"/><path d="M1527.5 432V414.5H1842" fill="none" stroke="#888"/>
<rect x="1527.5" y="449.5" width="12.5" height="12.5" fill="#fff" stroke="#333"/>
<text x="1546" y="460" textLength="25"><tspan class="u">H</tspan>ide</text>
<rect x="1633.5" y="449.5" width="12.5" height="12.5" fill="#fff" stroke="#333"/>
<text x="1652" y="460" textLength="25">L<tspan class="u">o</tspan>ck</text>
<rect x="1739.5" y="444.5" width="105" height="22.5" fill="#dcdcdc" stroke="#adadad"/>
<text x="1783.5" y="460" textLength="16"><tspan class="u">S</tspan>et</text>
<rect x="1525.5" y="478.5" width="7.5" height="7.5" fill="#f6f6f6" stroke="#888"/><path d="M1527 482.3H1531.5M1529.3 480V484.5" stroke="#333"/>
<text x="1539" y="486" textLength="62"><tspan class="u">I</tspan>nteractivity</text>
<line x1="1516" y1="495.7" x2="1853" y2="495.7" stroke="#f8f8f8"/>

<!-- palette X -->
<rect x="0" y="978" width="13" height="15" fill="#fff"/>
<path d="M0 978L13 993M13 978L0 993" stroke="#633" stroke-width="1.2"/>
<path d="M1915 977.5L1910 981.5L1915 985.5Z" fill="#111"/>

<!-- lower scrollbar -->
<rect x="0" y="997" width="1915" height="14" fill="#f0f0f0"/>
<rect x="14" y="997" width="592" height="14" fill="#cdcdcd"/>
<path d="M7 1000L3 1004L7 1008" fill="none" stroke="#aaa" stroke-width="1.4"/>
<path d="M1898 1000L1902 1004L1898 1008" fill="none" stroke="#444" stroke-width="1.8"/>

<!-- status bar -->
<rect x="0" y="1011" width="1915" height="29" fill="#f0f0f0"/>
<rect x="0" y="1040" width="1915" height="3" fill="#1c3238"/>
<text x="0" y="1023" textLength="15">Fill:</text>
<text x="0" y="1037" textLength="35">Stroke:</text>
<rect x="39" y="1012" width="80" height="14" fill="#3a3a3a"/>
<text x="66" y="1037" style="font-style:italic;font-size:11px" textLength="25">None</text>
<text x="124" y="1030" textLength="11">O:</text>
<rect x="137.5" y="1015.5" width="36" height="20.5" fill="#fff" stroke="#ccc"/><text x="141" y="1030">0</text>
<use href="#sp" transform="translate(174.5,1015)"/>
<line x1="187.8" y1="1012" x2="187.8" y2="1039" stroke="#ccc"/>
<ellipse cx="200" cy="1026" rx="3.5" ry="3" fill="#555"/><path d="M196 1023L197 1021M200 1022V1020M204 1023L203 1021" stroke="#555"/>
<rect x="217" y="1026" width="5.5" height="5" fill="#f0e8c8" stroke="#776"/><path d="M218 1026V1023.5A1.7 1.7 0 0 1 221.5 1023.5" fill="none" stroke="#776"/>
<rect x="228" y="1012.5" width="60" height="27" fill="#fff" stroke="#ddd"/><rect x="288" y="1012.5" width="17.5" height="27" fill="#dcdcdc" stroke="#bbb"/><use href="#ch" transform="translate(297,1027)"/>
<text x="238" y="1030" style="font-size:10px;font-weight:bold" textLength="41">•Ebene 1</text>
<text x="307.6" y="1030" style="font-weight:bold" textLength="30">Circle</text>
<text x="344.4" y="1030" textLength="38">in layer</text>
<text x="385" y="1030" style="font-weight:bold" textLength="47.5">Ebene 1.</text>
<text x="436" y="1030" textLength="247.5">Click selection to toggle scale/rotation handles.</text>
<text x="1780" y="1022" style="font-size:10px" textLength="8">X:</text>
<text x="1780" y="1036.5" style="font-size:10px" textLength="8">Y:</text>
<text x="1840" y="1022" style="font-size:10px;text-anchor:end;font-family:'Liberation Mono',monospace">6,68</text>
<text x="1840" y="1036.5" style="font-size:10px;text-anchor:end;font-family:'Liberation Mono',monospace">261,66</text>
<text x="1849" y="1030" textLength="9">Z:</text>
<rect x="1860.5" y="1015.5" width="45" height="20.5" fill="#fff" stroke="#ccc"/><text x="1870" y="1031" textLength="21">99%</text>
<use href="#sp" transform="translate(1906.5,1015)"/>
</svg>
<div id="pal"><i style="background:#000"></i><i style="background:#1a1a1a"></i><i style="background:#333"></i><i style="background:#4d4d4d"></i><i style="background:#666"></i><i style="background:#808080"></i><i style="background:#999"></i><i style="background:#b3b3b3"></i><i style="background:#ccc"></i><i style="background:#e6e6e6"></i><i style="background:#ececec"></i><i style="background:#f2f2f2"></i><i style="background:#f9f9f9"></i><i style="background:#fff"></i><i style="background:#800000"></i><i style="background:#f00"></i><i style="background:#808000"></i><i style="background:#ff0"></i><i style="background:#008000"></i><i style="background:#0f0"></i><i style="background:#008080"></i><i style="background:#0ff"></i><i style="background:#000080"></i><i style="background:#00f"></i><i style="background:#800080"></i><i style="background:#f0f"></i><i style="background:#2b0000"></i><i style="background:#500"></i><i style="background:#800000"></i><i style="background:#a00"></i><i style="background:#d40000"></i><i style="background:#f00"></i><i style="background:#ff2a2a"></i><i style="background:#f55"></i><i style="background:#ff8080"></i><i style="background:#faa"></i><i style="background:#ffd5d5"></i><i style="background:#280b0b"></i><i style="background:#501616"></i><i style="background:#782121"></i><i style="background:#a02c2c"></i><i style="background:#c83737"></i><i style="background:#d35f5f"></i><i style="background:#de8787"></i><i style="background:#e9afaf"></i><i style="background:#f4d7d7"></i><i style="background:#241c1c"></i><i style="background:#483737"></i><i style="background:#6c5353"></i><i style="background:#916f6f"></i><i style="background:#ac9393"></i><i style="background:#c8b7b7"></i><i style="background:#e3dbdb"></i><i style="background:#2b1100"></i><i style="background:#520"></i><i style="background:#803300"></i><i style="background:#a40"></i><i style="background:#d45500"></i><i style="background:#f60"></i><i style="background:#ff7f2a"></i><i style="background:#f95"></i><i style="background:#ffb380"></i><i style="background:#fca"></i><i style="background:#ffe6d5"></i><i style="background:#28170b"></i><i style="background:#502d16"></i><i style="background:#784421"></i><i style="background:#a05a2c"></i><i style="background:#c87137"></i><i style="background:#d38d5f"></i><i style="background:#deaa87"></i><i style="background:#e9c6af"></i><i style="background:#f4e3d7"></i><i style="background:#241f1c"></i><i style="background:#483e37"></i><i style="background:#6c5d53"></i><i style="background:#917c6f"></i><i style="background:#ac9d93"></i><i style="background:#c8beb7"></i><i style="background:#e3dedb"></i><i style="background:#2b2200"></i><i style="background:#540"></i><i style="background:#806600"></i><i style="background:#a80"></i><i style="background:#d4aa00"></i><i style="background:#fc0"></i><i style="background:#ffd42a"></i><i style="background:#fd5"></i><i style="background:#ffe680"></i><i style="background:#fea"></i><i style="background:#fff6d5"></i><i style="background:#28220b"></i><i style="background:#504416"></i><i style="background:#786721"></i><i style="background:#a0892c"></i><i style="background:#c8ab37"></i><i style="background:#d3bc5f"></i><i style="background:#decd87"></i><i style="background:#e9ddaf"></i><i style="background:#f4eed7"></i><i style="background:#24221c"></i><i style="background:#484537"></i><i style="background:#6c6753"></i><i style="background:#918a6f"></i><i style="background:#aca793"></i><i style="background:#c8c4b7"></i><i style="background:#e3e2db"></i><i style="background:#222b00"></i><i style="background:#450"></i><i style="background:#668000"></i><i style="background:#8a0"></i><i style="background:#aad400"></i><i style="background:#cf0"></i><i style="background:#d4ff2a"></i><i style="background:#df5"></i><i style="background:#e5ff80"></i><i style="background:#efa"></i><i style="background:#f6ffd5"></i><i style="background:#22280b"></i><i style="background:#445016"></i><i style="background:#677821"></i><i style="background:#89a02c"></i><i style="background:#abc837"></i><i style="background:#bcd35f"></i><i style="background:#cdde87"></i><i style="background:#dde9af"></i><i style="background:#eef4d7"></i><i style="background:#22241c"></i><i style="background:#454837"></i><i style="background:#676c53"></i><i style="background:#8a916f"></i><i style="background:#a7ac93"></i><i style="background:#c4c8b7"></i><i style="background:#e2e3db"></i><i style="background:#112b00"></i><i style="background:#225500"></i></div>
</body></html>
